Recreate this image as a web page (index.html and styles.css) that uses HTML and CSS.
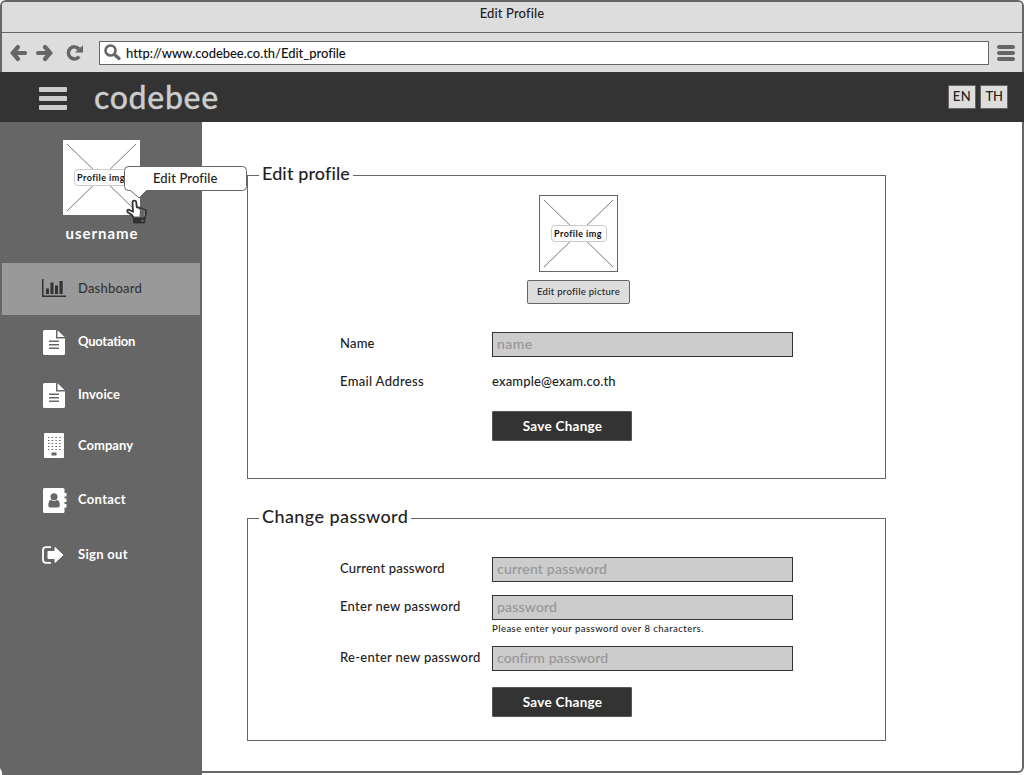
FILE: index.html
```html
<!DOCTYPE html>
<html lang="en">
<head>
<meta charset="utf-8">
<title>Edit Profile</title>
<link rel="stylesheet" href="styles.css">
</head>
<body>
<svg class="defs" width="0" height="0">
  <symbol id="doc" viewBox="0 0 22 25">
    <path fill="#fff" fill-rule="evenodd" d="M1.500 0H13v8.500h9V23.500a1.500 1.500 0 0 1-1.500 1.500h-19A1.500 1.500 0 0 1 0 23.500v-22A1.500 1.500 0 0 1 1.500 0zM6 10.500V12h10v-1.500zM6 14v1.500h10V14zM6 17.500V19h10v-1.500z"/>
    <path fill="#fff" d="M14.500 0.300L21.500 7H14.500z"/>
  </symbol>
</svg>
<div class="window">
  <div class="titlebar"><span class="page-title">Edit Profile</span></div>
  <div class="toolbar">
    <svg class="nav-icons" width="75" height="18" viewBox="0 0 75 18">
      <g fill="none" stroke="#666" stroke-width="4.200">
        <path d="M8 3L2.800 9 8 15M3 9h12" stroke-linecap="round"/>
        <path d="M35 3L40.200 9 35 15M40 9H28" stroke-linecap="round"/>
        <path d="M69 5A6 6 0 1 0 69.200 12.500" stroke-width="3.500"/>
      </g>
      <path fill="#666" d="M73 1.200V8.500H65z"/>
    </svg>
    <div class="address">
      <svg width="18" height="18" viewBox="0 0 18 18" fill="none" stroke="#666"><circle cx="6.500" cy="6.500" r="5" stroke-width="2.600"/><path d="M10.500 10.500l4.500 4" stroke-width="3.300" stroke-linecap="round"/></svg>
      <span class="url">http://www.codebee.co.th/Edit_profile</span>
    </div>
    <div class="bars bars-small"><i></i><i></i><i></i></div>
  </div>
  <header class="header">
    <div class="bars"><i></i><i></i><i></i></div>
    <span class="logo">codebee</span>
    <div class="langs"><span class="lang en">EN</span><span class="lang th">TH</span></div>
  </header>
  <div class="body">
    <aside class="sidebar">
      <div class="avatar">
        <svg width="77" height="75" viewBox="0 0 77 75" stroke="#777"><path d="M4 4L73 71M73 4L4 71"/></svg>
        <span class="img-label">Profile img</span>
        <div class="tooltip">
          <svg width="123" height="34" viewBox="0 0 123 34"><path fill="#fff" stroke="#666" d="M4 .5H118.500a4 4 0 0 1 4 4V20.500a4 4 0 0 1-4 4H22.500L15 32 6.500 24.500H4.500a4 4 0 0 1-4-4V4.500a4 4 0 0 1 4-4z"/></svg>
          <span class="tip-text">Edit Profile</span>
        </div>
        <svg class="cursor" width="22" height="26" viewBox="0 0 22 26"><path fill="#fff" stroke="#333" stroke-width="1.800" stroke-linejoin="round" d="M8 19.500L6 16 1.800 13.200C.8 12 1.500 10.500 3 10.800L7 12.800 6.500 3.500C6.500 1 10 1 10.300 3.300L10.800 8.300 13 8.500 13.600 9.500 16.300 9.500 17 10.700C19.500 10.300 20.300 11.500 20 13L18.700 19.500z"/><path fill="#666" d="M14 9.800l2.300-.1.700 1.600c1.500-.2 2.300.6 2 1.700L17.800 19H8.500l-1-1.600 6 .1z"/><path fill="#333" d="M7 18.500h12.300V23.500a1 1 0 0 1-1 1H8a1 1 0 0 1-1-1z"/><path fill="#999" d="M15.800 21h1.500v1.300h-1.500z"/></svg>
      </div>
      <div class="username"><span>username</span></div>
      <nav class="menu">
        <a class="item active"><svg width="24" height="19" viewBox="0 0 24 19" fill="#333"><path d="M0 0h1.500v16.500H24V18H0zM4 9.500h3V15H4zM8.500 3.500h3V15h-3zM13 6.500h3V15h-3zM17.500 2h3.200v13h-3.200z"/></svg><span class="t-dashboard">Dashboard</span></a>
        <a class="item"><svg width="22" height="25"><use href="#doc"/></svg><span class="t-quotation">Quotation</span></a>
        <a class="item"><svg width="22" height="25"><use href="#doc"/></svg><span class="t-invoice">Invoice</span></a>
        <a class="item"><svg width="22" height="25" viewBox="0 0 22 25"><rect x="1" width="20" height="25" rx="1" fill="#fff"/><g stroke="#666" stroke-width="1.200" stroke-dasharray="1.500 2.200"><path d="M5 4.500h13M5 7.500h13M5 10.500h13M5 13.500h13M5 16.500h13"/></g><path fill="#666" d="M8.500 19.500h5v3h-5z"/></svg><span class="t-company">Company</span></a>
        <a class="item"><svg width="24" height="25" viewBox="0 0 24 25"><path fill="#fff" d="M1.500 0H20a1.500 1.500 0 0 1 1.500 1.500V5H23.500v3.500H21.500v2H23.500V14H21.500v2H23.500v3.500H21.500v4A1.500 1.500 0 0 1 20 25H1.500A1.500 1.500 0 0 1 0 23.500v-22A1.500 1.500 0 0 1 1.500 0z"/><path fill="#666" d="M5.300 17.500c0-3.500 1-5.500 3-5.500 1.500 1.200 4 1.200 5.500 0 2 0 3 2 3 5.500 0 1.300-.8 2-1.800 2H7c-1 0-1.700-.7-1.700-2z"/><circle cx="11" cy="8.800" r="3.500" fill="#666"/></svg><span class="t-contact">Contact</span></a>
        <a class="item"><svg width="22" height="18" viewBox="0 0 22 18"><path fill="none" stroke="#fff" stroke-width="1.800" d="M9 1.200H4Q1 1.200 1 4.200v9.600q0 3 3 3h5"/><path fill="#fff" stroke="#fff" stroke-linejoin="round" d="M6 5.500h7V1.500L21 9l-8 7.500V12.500H6z"/></svg><span class="t-signout">Sign out</span></a>
      </nav>
    </aside>
    <main class="main">
      <section class="panel profile">
        <h2><span class="t-edit">Edit profile</span></h2>
        <div class="picture">
          <div class="frame">
            <svg width="77" height="75" viewBox="0 0 77 75" stroke="#777"><path d="M4 4L73 71M73 4L4 71"/></svg>
            <span class="img-label">Profile img</span>
          </div>
          <button class="pic-button"><span>Edit profile picture</span></button>
        </div>
        <div class="row">
          <label class="t-name">Name</label>
          <div class="field"><span class="p-name">name</span></div>
        </div>
        <div class="row email">
          <label class="t-email">Email Address</label>
          <span class="t-example">example@exam.co.th</span>
        </div>
        <button class="save"><span>Save Change</span></button>
      </section>
      <section class="panel password">
        <h2><span class="t-change">Change password</span></h2>
        <div class="row">
          <label class="t-current">Current password</label>
          <div class="field"><span class="p-current">current password</span></div>
        </div>
        <div class="row">
          <label class="t-new">Enter new password</label>
          <div class="field"><span class="p-new">password</span></div>
        </div>
        <p class="hint">Please enter your password over 8 characters.</p>
        <div class="row">
          <label class="t-again">Re-enter new password</label>
          <div class="field"><span class="p-again">confirm password</span></div>
        </div>
        <button class="save"><span>Save Change</span></button>
      </section>
    </main>
  </div>
</div>
</body>
</html>
```
FILE: styles.css
```css
* { box-sizing: border-box; }
html { background: #fff; }
body { margin: 0; height: 775px; overflow: hidden; font: 500 13px/18px Lato, sans-serif; color: #222; white-space: nowrap; }
svg { display: block; flex: none; }
.defs { position: absolute; }
.window { width: 1024px; height: 773px; border: 2px solid #666; border-radius: 6px; display: flex; flex-direction: column; background: #fff; }

.titlebar { height: 31px; border-bottom: 1px solid #666; background: #ddd; border-radius: 4px 4px 0 0; display: flex; justify-content: center; padding-top: 2px; }
.page-title { letter-spacing: .14px; }
.toolbar { height: 39px; background: #ddd; display: flex; align-items: center; padding: 0 7px 0 8px; }
.nav-icons { margin-right: 14px; }
.address { width: 890px; height: 24px; border: 1px solid #666; background: #fff; display: flex; align-items: center; gap: 4px; padding-left: 4px; margin-top: 1px; }
.url { letter-spacing: -.04px; color: #111; }
.bars { width: 28px; height: 23px; display: flex; flex-direction: column; justify-content: space-between; }
.bars i { height: 5px; background: #ccc; border-radius: 1px; }
.bars-small { width: 18px; height: 16px; margin: 1px 0 0 8px; }
.bars-small i { height: 4px; background: #666; border-radius: 2px; }

.header { height: 50px; margin: 0 -2px; background: #333; display: flex; align-items: center; padding: 0 16px 0 39px; }
.header .bars { margin-top: 3px; }
.logo { font-size: 32px; line-height: 40px; letter-spacing: .68px; color: #ccc; margin-left: 27px; -webkit-text-stroke: .3px #ccc; }
.langs { margin-left: auto; display: flex; gap: 4px; }
.lang { width: 28px; height: 24px; background: #ddd; border: 1px solid #666; text-align: center; line-height: 21px; }
.en { letter-spacing: .4px; }
.th { letter-spacing: -.3px; }

.body { flex: 1; display: flex; min-height: 0; }
.sidebar { width: 200px; height: 653px; background: #666; color: #fff; flex: none; display: flex; flex-direction: column; }
.avatar { width: 77px; height: 75px; margin: 18px 0 0 61px; background: #fff; position: relative; color: #111; flex: none; }
.img-label { position: absolute; left: 11px; top: 29px; width: 56px; height: 17px; border: 1px solid #ccc; border-radius: 4px; background: rgba(255, 255, 255, .85); font-size: 9px; font-weight: 700; line-height: 15px; letter-spacing: .45px; padding-left: 2px; color: #111; }
.tooltip { position: absolute; left: 61px; top: 26px; z-index: 2; }
.tip-text { position: absolute; left: 29px; top: 3px; color: #222; letter-spacing: .14px; }
.cursor { position: absolute; left: 63px; top: 59px; z-index: 3; }
.username { margin-top: 8px; height: 20px; line-height: 20px; font-size: 15px; font-weight: 700; letter-spacing: .96px; text-align: center; flex: none; }
.menu { margin-top: 20px; display: grid; grid-template-rows: 52px 53px 53px 49px 58px 51px; }
.item { display: flex; align-items: center; padding-left: 41px; font-weight: 700; }
.item svg { margin-right: 13px; }
.item span { padding-bottom: 2px; }
.item.active { width: 198px; background: #999; color: #333; font-weight: 500; padding-left: 40px; }
.item.active svg { margin: 0 12px 2px 0; }
.item:nth-child(2) svg, .item:nth-child(3) svg { margin-top: 1px; }
.item:nth-child(5) { padding-top: 2px; }
.item:nth-child(5) svg { margin-right: 11px; }
.item:nth-child(6) { padding: 2px 0 0 40px; }
.item:nth-child(6) svg { margin-right: 14px; }
.t-dashboard { letter-spacing: .2px; }
.t-quotation { letter-spacing: -.25px; }
.t-invoice { letter-spacing: .09px; }
.t-company { letter-spacing: .03px; }
.t-contact { letter-spacing: .33px; }
.t-signout { letter-spacing: .3px; }

.main { flex: 1; padding: 53px 0 0 45px; }
.panel { width: 639px; border: 1px solid #666; padding-left: 92px; }
.profile { height: 304px; margin-bottom: 39px; }
.password { height: 223px; }
h2 { width: fit-content; height: 24px; margin: -14px 0 0 -81px; padding: 0 3px; background: #fff; font-size: 18px; font-weight: 500; line-height: 23px; }
.t-edit { letter-spacing: .12px; }
.t-change { letter-spacing: .43px; }
.picture { width: 103px; margin: 9px 0 28px 187px; display: flex; flex-direction: column; align-items: center; gap: 8px; }
.frame { width: 79px; height: 77px; border: 1px solid #666; position: relative; }
button { font-family: Lato, sans-serif; padding: 0; }
.pic-button { width: 103px; height: 24px; border: 1px solid #666; border-radius: 2px; background: #ddd; color: #222; font-size: 9.5px; font-weight: 500; letter-spacing: .28px; line-height: 20px; }
.row { display: grid; grid-template-columns: 152px 301px; height: 25px; align-items: center; margin-bottom: 13px; }
.row label { padding-bottom: 4px; }
.email { margin-bottom: 16px; }
.email span { padding-bottom: 4px; }
.field { height: 25px; border: 1px solid #333; background: #ccc; color: #999; padding-left: 4px; font-size: 14px; line-height: 22px; -webkit-text-stroke: .1px #999; }
.save { display: block; width: 140px; height: 30px; margin-left: 152px; border: 1px solid #555; border-radius: 1px; background: #333; color: #fff; font-size: 13.5px; font-weight: 700; letter-spacing: .28px; line-height: 26px; padding: 0 0 1px 1px; }
.password .row:nth-of-type(1) { margin-top: 28px; }
.password .row:nth-of-type(2) { margin-bottom: 0; }
.hint { margin: 0 0 8px 152px; height: 18px; font-size: 9.5px; line-height: 18px; letter-spacing: .46px; }
.password .row:nth-of-type(3) { margin-bottom: 16px; }
.t-name { letter-spacing: .2px; }
.p-name { letter-spacing: .44px; }
.t-email { letter-spacing: .32px; }
.t-example { letter-spacing: .15px; }
.t-current { letter-spacing: .2px; }
.p-current { letter-spacing: .2px; }
.t-new { letter-spacing: .27px; }
.p-new { letter-spacing: .18px; }
.t-again { letter-spacing: .28px; }
.p-again { letter-spacing: .1px; }
```
